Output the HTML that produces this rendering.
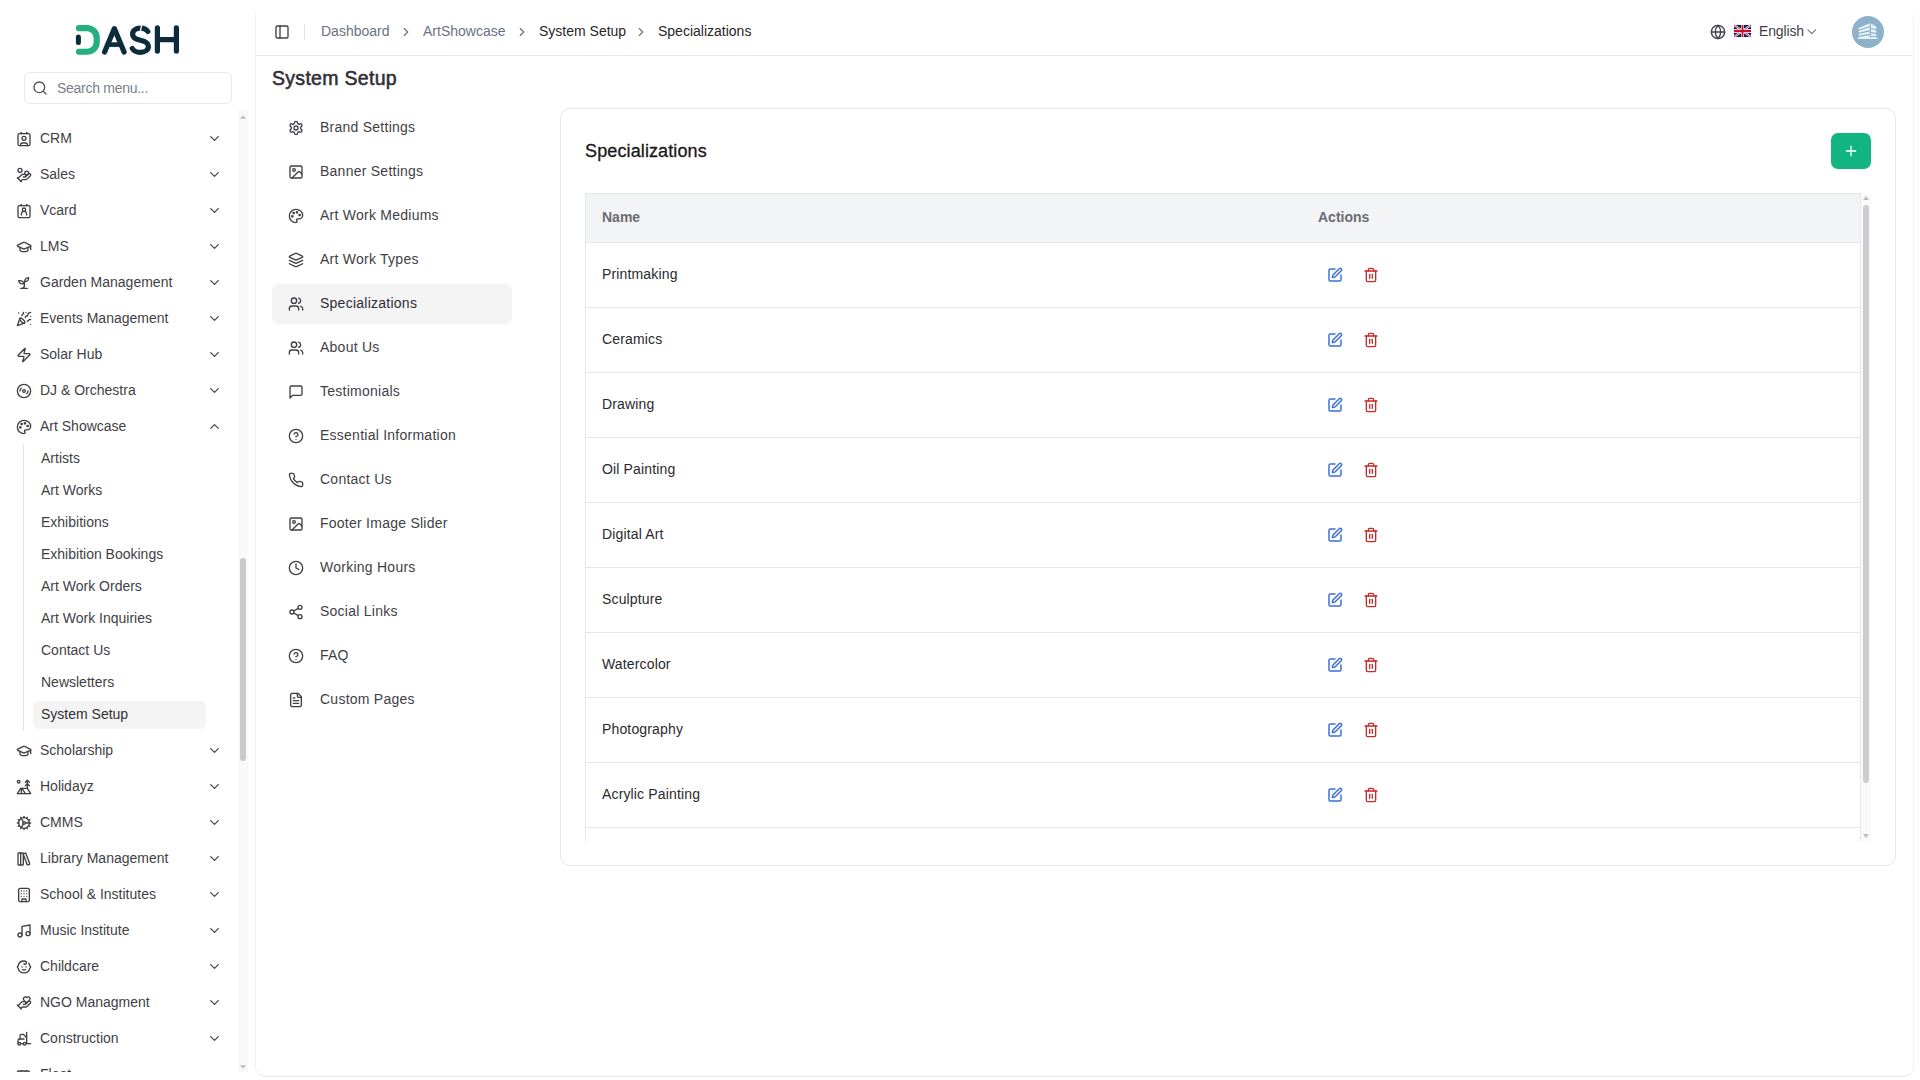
<!DOCTYPE html>
<html><head><meta charset="utf-8"><title>Specializations</title>
<style>
*{box-sizing:border-box;margin:0;padding:0}
html,body{width:1920px;height:1080px;overflow:hidden;background:#ffffff;font-family:"Liberation Sans",sans-serif}
.t{position:absolute;white-space:nowrap}
.ic{position:absolute;overflow:visible}
.box{position:absolute}
#sb{position:absolute;left:0;top:0;width:255px;height:1080px;background:#fff}
#menu{position:absolute;left:0;top:0;width:236px;height:1072px;overflow:hidden;clip-path:inset(110px 0 0 0)}
#main{position:absolute;left:255px;top:-30px;width:1659px;height:1107px;border:1px solid #f2f2f2;border-bottom-color:#e6e6e6;border-radius:10px;background:#fff}
#tbl{position:absolute;left:585px;top:193px;width:1276px;height:648px;overflow:hidden}
</style></head><body>
<div id="sb">
<svg class="ic" style="left:0;top:0;width:255px;height:70px" viewBox="0 0 255 70">
<path d="M79 28.2 H87 A9.75 9.75 0 0 1 96.75 37.95 V42 A9.75 9.75 0 0 1 87 51.75 H79" fill="none" stroke="#22b07f" stroke-width="6.2" stroke-linecap="round" stroke-linejoin="round"/>
<path d="M78.4 37 V42.6" fill="none" stroke="#0c2b3b" stroke-width="5" stroke-linecap="round"/>
<path d="M104.6 52.1 L114.35 28.6 L124.1 52.1" fill="none" stroke="#0c2b3b" stroke-width="5.2" stroke-linecap="round" stroke-linejoin="round"/>
<path d="M108.2 44.6 H120.5" fill="none" stroke="#0c2b3b" stroke-width="4.6"/>
<path d="M147.8 31.5 C146.5 29.2 143.5 28.1 140.3 28.1 C136 28.1 132.6 30.6 132.6 34.2 C132.6 38 136 39.3 140.3 40.2 C144.6 41.1 148.4 42.5 148.4 46.3 C148.4 50 144.8 52.4 140.3 52.4 C136.8 52.4 133.8 51 132.3 48.5" fill="none" stroke="#0c2b3b" stroke-width="5.2" stroke-linecap="round"/>
<path d="M141.6 24.5 L140.2 33" fill="none" stroke="#ffffff" stroke-width="1.3"/>
<path d="M157.4 27.8 V51.1 M176.4 27.8 V51.1 M157.4 39.6 H176.4" fill="none" stroke="#0c2b3b" stroke-width="5.2" stroke-linecap="round"/>
</svg>
<div class="box" style="left:24px;top:72px;width:208px;height:32px;border:1px solid #e8e8ea;border-radius:6px"></div>
<svg class="ic" style="left:32px;top:80.3px;width:16px;height:16px;color:#52525b;" viewBox="0 0 24 24" fill="none" stroke="currentColor" stroke-width="2" stroke-linecap="round" stroke-linejoin="round"><circle cx="11" cy="11" r="8"/><path d="m21 21-4.3-4.3"/></svg>
<div class="t" style="left:57px;top:78.0px;font-size:14px;line-height:20px;color:#7a7f89;font-weight:normal;letter-spacing:-0.28px">Search menu...</div>
<div id="menu">
<svg class="ic" style="left:16px;top:130.5px;width:16px;height:16px;color:#3f3f46;" viewBox="0 0 24 24" fill="none" stroke="currentColor" stroke-width="2" stroke-linecap="round" stroke-linejoin="round"><path d="M16 2v2"/><path d="M7 22v-2a2 2 0 0 1 2-2h6a2 2 0 0 1 2 2v2"/><path d="M8 2v2"/><circle cx="12" cy="11" r="3"/><rect x="3" y="4" width="18" height="18" rx="2"/></svg>
<div class="t" style="left:40px;top:128.0px;font-size:14px;line-height:20px;color:#3f3f46;font-weight:normal;">CRM</div>
<svg class="ic" style="left:207px;top:131.3px;width:15px;height:15px;color:#3f3f46;" viewBox="0 0 24 24" fill="none" stroke="currentColor" stroke-width="1.9" stroke-linecap="round" stroke-linejoin="round"><path d="m6 9 6 6 6-6"/></svg>
<svg class="ic" style="left:16px;top:166.5px;width:16px;height:16px;color:#3f3f46;" viewBox="0 0 24 24" fill="none" stroke="currentColor" stroke-width="2" stroke-linecap="round" stroke-linejoin="round"><path d="M11 15h2a2 2 0 1 0 0-4h-3c-.6 0-1.1.2-1.4.6L3 17"/><path d="m7 21 1.6-1.4c.3-.4.8-.6 1.4-.6h4c1.1 0 2.1-.4 2.8-1.2l4.6-4.4a2 2 0 0 0-2.75-2.91l-4.2 3.9"/><path d="m2 16 6 6"/><circle cx="16" cy="9" r="2.9"/><circle cx="6" cy="5" r="3"/></svg>
<div class="t" style="left:40px;top:164.0px;font-size:14px;line-height:20px;color:#3f3f46;font-weight:normal;">Sales</div>
<svg class="ic" style="left:207px;top:167.3px;width:15px;height:15px;color:#3f3f46;" viewBox="0 0 24 24" fill="none" stroke="currentColor" stroke-width="1.9" stroke-linecap="round" stroke-linejoin="round"><path d="m6 9 6 6 6-6"/></svg>
<svg class="ic" style="left:16px;top:202.5px;width:16px;height:16px;color:#3f3f46;" viewBox="0 0 24 24" fill="none" stroke="currentColor" stroke-width="2" stroke-linecap="round" stroke-linejoin="round"><path d="M16 2v2"/><path d="M8 2v2"/><rect x="3" y="4" width="18" height="18" rx="2"/><circle cx="12" cy="10" r="2.5"/><path d="M8 18c0-3 1.8-5.5 4-5.5s4 2.5 4 5.5"/></svg>
<div class="t" style="left:40px;top:200.0px;font-size:14px;line-height:20px;color:#3f3f46;font-weight:normal;">Vcard</div>
<svg class="ic" style="left:207px;top:203.3px;width:15px;height:15px;color:#3f3f46;" viewBox="0 0 24 24" fill="none" stroke="currentColor" stroke-width="1.9" stroke-linecap="round" stroke-linejoin="round"><path d="m6 9 6 6 6-6"/></svg>
<svg class="ic" style="left:16px;top:238.5px;width:16px;height:16px;color:#3f3f46;" viewBox="0 0 24 24" fill="none" stroke="currentColor" stroke-width="2" stroke-linecap="round" stroke-linejoin="round"><path d="M21.42 10.922a1 1 0 0 0-.019-1.838L12.83 5.18a2 2 0 0 0-1.66 0L2.6 9.08a1 1 0 0 0 0 1.832l8.57 3.908a2 2 0 0 0 1.66 0z"/><path d="M22 10v6"/><path d="M6 12.5V16a6 3 0 0 0 12 0v-3.5"/></svg>
<div class="t" style="left:40px;top:236.0px;font-size:14px;line-height:20px;color:#3f3f46;font-weight:normal;">LMS</div>
<svg class="ic" style="left:207px;top:239.3px;width:15px;height:15px;color:#3f3f46;" viewBox="0 0 24 24" fill="none" stroke="currentColor" stroke-width="1.9" stroke-linecap="round" stroke-linejoin="round"><path d="m6 9 6 6 6-6"/></svg>
<svg class="ic" style="left:16px;top:274.5px;width:16px;height:16px;color:#3f3f46;" viewBox="0 0 24 24" fill="none" stroke="currentColor" stroke-width="2" stroke-linecap="round" stroke-linejoin="round"><path d="M7 20h10"/><path d="M10 20c5.5-2.5.8-6.4 3-10"/><path d="M9.5 9.4c1.1.8 1.8 2.2 2.3 3.7-2 .4-3.5.4-4.8-.3-1.2-.6-2.3-1.9-3-4.2 2.8-.5 4.4 0 5.5.8z"/><path d="M14.1 6a7 7 0 0 0-1.1 4c1.9-.1 3.3-.6 4.3-1.4 1-1 1.6-2.3 1.7-4.6-2.7.1-4 1-4.9 2z"/></svg>
<div class="t" style="left:40px;top:272.0px;font-size:14px;line-height:20px;color:#3f3f46;font-weight:normal;">Garden Management</div>
<svg class="ic" style="left:207px;top:275.3px;width:15px;height:15px;color:#3f3f46;" viewBox="0 0 24 24" fill="none" stroke="currentColor" stroke-width="1.9" stroke-linecap="round" stroke-linejoin="round"><path d="m6 9 6 6 6-6"/></svg>
<svg class="ic" style="left:16px;top:310.5px;width:16px;height:16px;color:#3f3f46;" viewBox="0 0 24 24" fill="none" stroke="currentColor" stroke-width="2" stroke-linecap="round" stroke-linejoin="round"><path d="M5.8 11.3 2 22l10.7-3.79"/><path d="M4 3h.01"/><path d="M22 8h.01"/><path d="M15 2h.01"/><path d="M22 20h.01"/><path d="m22 2-2.24.75a2.9 2.9 0 0 0-1.960 3.12c.1.86-.57 1.63-1.45 1.63h-.38c-.86 0-1.6.6-1.76 1.44L14 10"/><path d="m22 13-.82-.33c-.86-.34-1.820.2-1.98 1.11c-.11.7-.72 1.22-1.43 1.220H17"/><path d="m11 2 .33.82c.34.86-.2 1.82-1.11 1.98C9.52 4.9 9 5.52 9 6.23V7"/><path d="M11 13c1.93 1.93 2.830 4.17 2 5-.83.83-3.07-.07-5-2-1.93-1.93-2.83-4.17-2-5 .83-.83 3.07.07 5 2Z"/></svg>
<div class="t" style="left:40px;top:308.0px;font-size:14px;line-height:20px;color:#3f3f46;font-weight:normal;">Events Management</div>
<svg class="ic" style="left:207px;top:311.3px;width:15px;height:15px;color:#3f3f46;" viewBox="0 0 24 24" fill="none" stroke="currentColor" stroke-width="1.9" stroke-linecap="round" stroke-linejoin="round"><path d="m6 9 6 6 6-6"/></svg>
<svg class="ic" style="left:16px;top:346.5px;width:16px;height:16px;color:#3f3f46;" viewBox="0 0 24 24" fill="none" stroke="currentColor" stroke-width="2" stroke-linecap="round" stroke-linejoin="round"><path d="M4 14a1 1 0 0 1-.78-1.63l9.9-10.2a.5.5 0 0 1 .86.46l-1.92 6.02A1 1 0 0 0 13 10h7a1 1 0 0 1 .78 1.63l-9.9 10.2a.5.5 0 0 1-.86-.46l1.92-6.02A1 1 0 0 0 11 14z"/></svg>
<div class="t" style="left:40px;top:344.0px;font-size:14px;line-height:20px;color:#3f3f46;font-weight:normal;">Solar Hub</div>
<svg class="ic" style="left:207px;top:347.3px;width:15px;height:15px;color:#3f3f46;" viewBox="0 0 24 24" fill="none" stroke="currentColor" stroke-width="1.9" stroke-linecap="round" stroke-linejoin="round"><path d="m6 9 6 6 6-6"/></svg>
<svg class="ic" style="left:16px;top:382.5px;width:16px;height:16px;color:#3f3f46;" viewBox="0 0 24 24" fill="none" stroke="currentColor" stroke-width="2" stroke-linecap="round" stroke-linejoin="round"><circle cx="12" cy="12" r="10"/><path d="M6 12c0-1.7.7-3.2 1.8-4.2"/><circle cx="12" cy="12" r="2"/><path d="M18 12c0 1.7-.7 3.2-1.8 4.2"/></svg>
<div class="t" style="left:40px;top:380.0px;font-size:14px;line-height:20px;color:#3f3f46;font-weight:normal;">DJ &amp; Orchestra</div>
<svg class="ic" style="left:207px;top:383.3px;width:15px;height:15px;color:#3f3f46;" viewBox="0 0 24 24" fill="none" stroke="currentColor" stroke-width="1.9" stroke-linecap="round" stroke-linejoin="round"><path d="m6 9 6 6 6-6"/></svg>
<svg class="ic" style="left:16px;top:418.5px;width:16px;height:16px;color:#3f3f46;" viewBox="0 0 24 24" fill="none" stroke="currentColor" stroke-width="2" stroke-linecap="round" stroke-linejoin="round"><circle cx="13.5" cy="6.5" r="1" fill="currentColor"/><circle cx="17.5" cy="10.5" r="1" fill="currentColor"/><circle cx="8.5" cy="7.5" r="1" fill="currentColor"/><circle cx="6.5" cy="12.5" r="1" fill="currentColor"/><path d="M12 2C6.5 2 2 6.5 2 12s4.5 10 10 10c.926 0 1.648-.746 1.648-1.688 0-.437-.18-.835-.437-1.125-.29-.289-.438-.652-.438-1.125a1.64 1.64 0 0 1 1.668-1.668h1.996c3.051 0 5.555-2.503 5.555-5.554C21.965 6.012 17.461 2 12 2z"/></svg>
<div class="t" style="left:40px;top:416.0px;font-size:14px;line-height:20px;color:#3f3f46;font-weight:normal;">Art Showcase</div>
<svg class="ic" style="left:207px;top:419.2px;width:15px;height:15px;color:#3f3f46;" viewBox="0 0 24 24" fill="none" stroke="currentColor" stroke-width="1.9" stroke-linecap="round" stroke-linejoin="round"><path d="m18 15-6-6-6 6"/></svg>
<div class="box" style="left:23px;top:444px;width:1px;height:287px;background:#e4e4e7"></div>
<div class="box" style="left:33px;top:701px;width:173px;height:28px;background:#f4f4f5;border-radius:6px"></div>
<div class="t" style="left:41px;top:448.0px;font-size:14px;line-height:20px;color:#3f3f46;font-weight:normal;">Artists</div>
<div class="t" style="left:41px;top:480.0px;font-size:14px;line-height:20px;color:#3f3f46;font-weight:normal;">Art Works</div>
<div class="t" style="left:41px;top:512.0px;font-size:14px;line-height:20px;color:#3f3f46;font-weight:normal;">Exhibitions</div>
<div class="t" style="left:41px;top:544.0px;font-size:14px;line-height:20px;color:#3f3f46;font-weight:normal;">Exhibition Bookings</div>
<div class="t" style="left:41px;top:576.0px;font-size:14px;line-height:20px;color:#3f3f46;font-weight:normal;">Art Work Orders</div>
<div class="t" style="left:41px;top:608.0px;font-size:14px;line-height:20px;color:#3f3f46;font-weight:normal;">Art Work Inquiries</div>
<div class="t" style="left:41px;top:640.0px;font-size:14px;line-height:20px;color:#3f3f46;font-weight:normal;">Contact Us</div>
<div class="t" style="left:41px;top:672.0px;font-size:14px;line-height:20px;color:#3f3f46;font-weight:normal;">Newsletters</div>
<div class="t" style="left:41px;top:704.0px;font-size:14px;line-height:20px;color:#303036;font-weight:normal;">System Setup</div>
<svg class="ic" style="left:16px;top:742.5px;width:16px;height:16px;color:#3f3f46;" viewBox="0 0 24 24" fill="none" stroke="currentColor" stroke-width="2" stroke-linecap="round" stroke-linejoin="round"><path d="M21.42 10.922a1 1 0 0 0-.019-1.838L12.83 5.18a2 2 0 0 0-1.66 0L2.6 9.08a1 1 0 0 0 0 1.832l8.57 3.908a2 2 0 0 0 1.66 0z"/><path d="M22 10v6"/><path d="M6 12.5V16a6 3 0 0 0 12 0v-3.5"/></svg>
<div class="t" style="left:40px;top:740.0px;font-size:14px;line-height:20px;color:#3f3f46;font-weight:normal;">Scholarship</div>
<svg class="ic" style="left:207px;top:743.3px;width:15px;height:15px;color:#3f3f46;" viewBox="0 0 24 24" fill="none" stroke="currentColor" stroke-width="1.9" stroke-linecap="round" stroke-linejoin="round"><path d="m6 9 6 6 6-6"/></svg>
<svg class="ic" style="left:16px;top:778.5px;width:16px;height:16px;color:#3f3f46;" viewBox="0 0 24 24" fill="none" stroke="currentColor" stroke-width="2" stroke-linecap="round" stroke-linejoin="round"><circle cx="4" cy="4" r="2"/><path d="m14 5 3-3 3 3"/><path d="m14 10 3-3 3 3"/><path d="M17 14V2"/><path d="M17 14H7l-5 8h20Z"/><path d="M8 14v8"/><path d="m9 14 5 8"/></svg>
<div class="t" style="left:40px;top:776.0px;font-size:14px;line-height:20px;color:#3f3f46;font-weight:normal;">Holidayz</div>
<svg class="ic" style="left:207px;top:779.3px;width:15px;height:15px;color:#3f3f46;" viewBox="0 0 24 24" fill="none" stroke="currentColor" stroke-width="1.9" stroke-linecap="round" stroke-linejoin="round"><path d="m6 9 6 6 6-6"/></svg>
<svg class="ic" style="left:16px;top:814.5px;width:16px;height:16px;color:#3f3f46;" viewBox="0 0 24 24" fill="none" stroke="currentColor" stroke-width="2" stroke-linecap="round" stroke-linejoin="round"><path d="M12 20a8 8 0 1 0 0-16 8 8 0 0 0 0 16Z"/><path d="M12 14a2 2 0 1 0 0-4 2 2 0 0 0 0 4Z"/><path d="M12 2v2"/><path d="M12 22v-2"/><path d="m17 20.66-1-1.73"/><path d="M11 10.27 7 3.34"/><path d="m20.66 17-1.73-1"/><path d="m3.34 7 1.73 1"/><path d="M14 12h8"/><path d="M2 12h2"/><path d="m20.66 7-1.73 1"/><path d="m3.34 17 1.73-1"/><path d="m17 3.34-1 1.73"/><path d="m11 13.73-4 6.93"/></svg>
<div class="t" style="left:40px;top:812.0px;font-size:14px;line-height:20px;color:#3f3f46;font-weight:normal;">CMMS</div>
<svg class="ic" style="left:207px;top:815.3px;width:15px;height:15px;color:#3f3f46;" viewBox="0 0 24 24" fill="none" stroke="currentColor" stroke-width="1.9" stroke-linecap="round" stroke-linejoin="round"><path d="m6 9 6 6 6-6"/></svg>
<svg class="ic" style="left:16px;top:850.5px;width:16px;height:16px;color:#3f3f46;" viewBox="0 0 24 24" fill="none" stroke="currentColor" stroke-width="2" stroke-linecap="round" stroke-linejoin="round"><rect width="8" height="18" x="3" y="3" rx="1"/><path d="M7 3v18"/><path d="M20.4 18.9c.2.5-.1 1.1-.6 1.3l-1.9.7c-.5.2-1.1-.1-1.3-.6L11.1 5.1c-.2-.5.1-1.1.6-1.3l1.9-.7c.5-.2 1.1.1 1.3.6Z"/></svg>
<div class="t" style="left:40px;top:848.0px;font-size:14px;line-height:20px;color:#3f3f46;font-weight:normal;">Library Management</div>
<svg class="ic" style="left:207px;top:851.3px;width:15px;height:15px;color:#3f3f46;" viewBox="0 0 24 24" fill="none" stroke="currentColor" stroke-width="1.9" stroke-linecap="round" stroke-linejoin="round"><path d="m6 9 6 6 6-6"/></svg>
<svg class="ic" style="left:16px;top:886.5px;width:16px;height:16px;color:#3f3f46;" viewBox="0 0 24 24" fill="none" stroke="currentColor" stroke-width="2" stroke-linecap="round" stroke-linejoin="round"><rect width="16" height="20" x="4" y="2" rx="2" ry="2"/><path d="M9 22v-4h6v4"/><path d="M8 6h.01"/><path d="M16 6h.01"/><path d="M12 6h.01"/><path d="M12 10h.01"/><path d="M12 14h.01"/><path d="M16 10h.01"/><path d="M16 14h.01"/><path d="M8 10h.01"/><path d="M8 14h.01"/></svg>
<div class="t" style="left:40px;top:884.0px;font-size:14px;line-height:20px;color:#3f3f46;font-weight:normal;">School &amp; Institutes</div>
<svg class="ic" style="left:207px;top:887.3px;width:15px;height:15px;color:#3f3f46;" viewBox="0 0 24 24" fill="none" stroke="currentColor" stroke-width="1.9" stroke-linecap="round" stroke-linejoin="round"><path d="m6 9 6 6 6-6"/></svg>
<svg class="ic" style="left:16px;top:922.5px;width:16px;height:16px;color:#3f3f46;" viewBox="0 0 24 24" fill="none" stroke="currentColor" stroke-width="2" stroke-linecap="round" stroke-linejoin="round"><path d="M9 18V5l12-2v13"/><circle cx="6" cy="18" r="3"/><circle cx="18" cy="16" r="3"/></svg>
<div class="t" style="left:40px;top:920.0px;font-size:14px;line-height:20px;color:#3f3f46;font-weight:normal;">Music Institute</div>
<svg class="ic" style="left:207px;top:923.3px;width:15px;height:15px;color:#3f3f46;" viewBox="0 0 24 24" fill="none" stroke="currentColor" stroke-width="1.9" stroke-linecap="round" stroke-linejoin="round"><path d="m6 9 6 6 6-6"/></svg>
<svg class="ic" style="left:16px;top:958.5px;width:16px;height:16px;color:#3f3f46;" viewBox="0 0 24 24" fill="none" stroke="currentColor" stroke-width="2" stroke-linecap="round" stroke-linejoin="round"><path d="M9 12h.01"/><path d="M15 12h.01"/><path d="M10 16c.5.3 1.2.5 2 .5s1.5-.2 2-.5"/><path d="M19 6.3a9 9 0 0 1 1.8 3.9 2 2 0 0 1 0 3.6 9 9 0 0 1-17.6 0 2 2 0 0 1 0-3.6A9 9 0 0 1 12 3c2 0 3.5 1.1 3.5 2.5s-.9 2.5-2 2.5c-.8 0-1.5-.4-1.5-1"/></svg>
<div class="t" style="left:40px;top:956.0px;font-size:14px;line-height:20px;color:#3f3f46;font-weight:normal;">Childcare</div>
<svg class="ic" style="left:207px;top:959.3px;width:15px;height:15px;color:#3f3f46;" viewBox="0 0 24 24" fill="none" stroke="currentColor" stroke-width="1.9" stroke-linecap="round" stroke-linejoin="round"><path d="m6 9 6 6 6-6"/></svg>
<svg class="ic" style="left:16px;top:994.5px;width:16px;height:16px;color:#3f3f46;" viewBox="0 0 24 24" fill="none" stroke="currentColor" stroke-width="2" stroke-linecap="round" stroke-linejoin="round"><path d="M11 14h2a2 2 0 1 0 0-4h-3c-.6 0-1.1.2-1.4.6L3 16"/><path d="m7 20 1.6-1.4c.3-.4.8-.6 1.4-.6h4c1.1 0 2.1-.4 2.8-1.2l4.6-4.4a2 2 0 0 0-2.75-2.91l-4.2 3.9"/><path d="m2 15 6 6"/><path d="M19.5 8.5c.7-.7 1.5-1.6 1.5-2.7A2.73 2.73 0 0 0 16 4a2.78 2.78 0 0 0-5 1.8c0 1.2.8 2 1.5 2.8L16 12Z"/></svg>
<div class="t" style="left:40px;top:992.0px;font-size:14px;line-height:20px;color:#3f3f46;font-weight:normal;">NGO Managment</div>
<svg class="ic" style="left:207px;top:995.3px;width:15px;height:15px;color:#3f3f46;" viewBox="0 0 24 24" fill="none" stroke="currentColor" stroke-width="1.9" stroke-linecap="round" stroke-linejoin="round"><path d="m6 9 6 6 6-6"/></svg>
<svg class="ic" style="left:16px;top:1030.5px;width:16px;height:16px;color:#3f3f46;" viewBox="0 0 24 24" fill="none" stroke="currentColor" stroke-width="2" stroke-linecap="round" stroke-linejoin="round"><path d="M12 12H5a2 2 0 0 0-2 2v5"/><circle cx="13" cy="19" r="2"/><circle cx="5" cy="19" r="2"/><path d="M8 19h3m5-17v17h6M6 12V7c0-1.1.9-2 2-2h3l5 5"/></svg>
<div class="t" style="left:40px;top:1028.0px;font-size:14px;line-height:20px;color:#3f3f46;font-weight:normal;">Construction</div>
<svg class="ic" style="left:207px;top:1031.3px;width:15px;height:15px;color:#3f3f46;" viewBox="0 0 24 24" fill="none" stroke="currentColor" stroke-width="1.9" stroke-linecap="round" stroke-linejoin="round"><path d="m6 9 6 6 6-6"/></svg>
<svg class="ic" style="left:16px;top:1066.5px;width:16px;height:16px;color:#3f3f46;" viewBox="0 0 24 24" fill="none" stroke="currentColor" stroke-width="2" stroke-linecap="round" stroke-linejoin="round"><path d="M8 6v6"/><path d="M15 6v6"/><path d="M2 12h19.6"/><path d="M18 18h3s.5-1.7.8-2.8c.1-.4.2-.8.2-1.2 0-.4-.1-.8-.2-1.2l-1.4-5C20.100 6.8 19.1 6 18 6H4a2 2 0 0 0-2 2v10h3"/><circle cx="7" cy="18" r="2"/><path d="M9 18h5"/><circle cx="16" cy="18" r="2"/></svg>
<div class="t" style="left:40px;top:1064.0px;font-size:14px;line-height:20px;color:#3f3f46;font-weight:normal;">Fleet</div>
</div>
<div class="box" style="left:238px;top:109px;width:10px;height:963px;background:#f9f9f9"></div>
<div class="box" style="left:240px;top:558px;width:6px;height:203px;background:#c9c9cc;border-radius:3px"></div>
<div class="box" style="left:240px;top:115px;width:0;height:0;border-left:3px solid transparent;border-right:3px solid transparent;border-bottom:4px solid #c2c2c2"></div>
<div class="box" style="left:240px;top:1065px;width:0;height:0;border-left:3px solid transparent;border-right:3px solid transparent;border-top:4px solid #c2c2c2"></div>
</div>
<div id="main"></div>
<div class="box" style="left:256px;top:55px;width:1656px;height:1px;background:#e5e7eb"></div>
<div class="box" style="left:250px;top:0;width:12px;height:18px;background:linear-gradient(#fff 40%,rgba(255,255,255,0))"></div>
<div class="box" style="left:1906px;top:0;width:14px;height:18px;background:linear-gradient(#fff 40%,rgba(255,255,255,0))"></div>
<svg class="ic" style="left:274px;top:24px;width:16px;height:16px;color:#3f3f46;" viewBox="0 0 24 24" fill="none" stroke="currentColor" stroke-width="2" stroke-linecap="round" stroke-linejoin="round"><rect width="18" height="18" x="3" y="3" rx="2"/><path d="M9 3v18"/></svg>
<div class="box" style="left:304px;top:24px;width:1px;height:16px;background:#e4e4e7"></div>
<div class="t" style="left:321px;top:21.0px;font-size:14px;line-height:20px;color:#6b7280;font-weight:normal;">Dashboard</div>
<div class="t" style="left:423px;top:21.0px;font-size:14px;line-height:20px;color:#6b7280;font-weight:normal;">ArtShowcase</div>
<div class="t" style="left:539px;top:21.0px;font-size:14px;line-height:20px;color:#27272a;font-weight:normal;">System Setup</div>
<div class="t" style="left:658px;top:21.0px;font-size:14px;line-height:20px;color:#27272a;font-weight:normal;">Specializations</div>
<svg class="ic" style="left:399px;top:25px;width:14px;height:14px;color:#6b7280;" viewBox="0 0 24 24" fill="none" stroke="currentColor" stroke-width="2" stroke-linecap="round" stroke-linejoin="round"><path d="m9 18 6-6-6-6"/></svg>
<svg class="ic" style="left:515px;top:25px;width:14px;height:14px;color:#6b7280;" viewBox="0 0 24 24" fill="none" stroke="currentColor" stroke-width="2" stroke-linecap="round" stroke-linejoin="round"><path d="m9 18 6-6-6-6"/></svg>
<svg class="ic" style="left:634px;top:25px;width:14px;height:14px;color:#6b7280;" viewBox="0 0 24 24" fill="none" stroke="currentColor" stroke-width="2" stroke-linecap="round" stroke-linejoin="round"><path d="m9 18 6-6-6-6"/></svg>
<svg class="ic" style="left:1710px;top:24px;width:16px;height:16px;color:#3f3f46;" viewBox="0 0 24 24" fill="none" stroke="currentColor" stroke-width="2" stroke-linecap="round" stroke-linejoin="round"><circle cx="12" cy="12" r="10"/><path d="M12 2a14.5 14.5 0 0 0 0 20 14.5 14.5 0 0 0 0-20"/><path d="M2 12h20"/></svg>
<svg class="ic" style="left:1734px;top:25px;width:17px;height:12px" viewBox="0 0 60 30" preserveAspectRatio="none">
<rect width="60" height="30" fill="#012169"/>
<path d="M0,0 L60,30 M60,0 L0,30" stroke="#fff" stroke-width="6"/>
<path d="M0,0 L60,30 M60,0 L0,30" stroke="#C8102E" stroke-width="2.5"/>
<path d="M30,0 V30 M0,15 H60" stroke="#fff" stroke-width="10"/>
<path d="M30,0 V30 M0,15 H60" stroke="#C8102E" stroke-width="6"/>
</svg>
<div class="t" style="left:1759px;top:21.0px;font-size:14px;line-height:20px;color:#3f3f46;font-weight:normal;letter-spacing:-0.15px">English</div>
<svg class="ic" style="left:1804.4px;top:23.7px;width:15.5px;height:15.5px;color:#71717a;" viewBox="0 0 24 24" fill="none" stroke="currentColor" stroke-width="1.7" stroke-linecap="round" stroke-linejoin="round"><path d="m6 9 6 6 6-6"/></svg>
<div class="box" style="left:1852px;top:16px;width:32px;height:32px;border-radius:50%;background:#8db1c8;overflow:hidden"><svg style="position:absolute;left:0;top:0;width:32px;height:32px" viewBox="0 0 32 32"><path d="M6.6 12 L18.2 6.9 L24.2 10.6 V22 H6.6 Z" fill="#e6f2f8"/><path d="M6 14.6 L18.2 10.6 M6 17.6 L18.2 14.6 M6 20.4 L18.2 18.4 M18.2 12.2 L24.5 14 M18.2 16.4 L24.5 17.6 M18.2 20.2 L24.5 20.8" stroke="#8db1c8" stroke-width="1.1" fill="none"/><path d="M18.3 7 V22.5" stroke="#8db1c8" stroke-width="1.1"/><path d="M5.8 22.4 H25.5" stroke="#e6f2f8" stroke-width="1.2"/></svg></div>
<div class="t" style="left:272px;top:66.4px;font-size:19.5px;line-height:24px;color:#2f2f36;font-weight:normal;-webkit-text-stroke:0.55px #2f2f36;letter-spacing:0.3px">System Setup</div>
<div class="box" style="left:272px;top:284px;width:240px;height:40px;background:#f4f4f5;border-radius:7px"></div>
<svg class="ic" style="left:287.7px;top:119.6px;width:16px;height:16px;color:#3f3f46;" viewBox="0 0 24 24" fill="none" stroke="currentColor" stroke-width="2" stroke-linecap="round" stroke-linejoin="round"><path d="M12.22 2h-.44a2 2 0 0 0-2 2v.18a2 2 0 0 1-1 1.73l-.43.25a2 2 0 0 1-2 0l-.15-.08a2 2 0 0 0-2.73.73l-.22.38a2 2 0 0 0 .73 2.73l.15.1a2 2 0 0 1 1 1.72v.51a2 2 0 0 1-1 1.74l-.15.09a2 2 0 0 0-.73 2.73l.22.38a2 2 0 0 0 2.73.73l.15-.08a2 2 0 0 1 2 0l.43.25a2 2 0 0 1 1 1.73V20a2 2 0 0 0 2 2h.44a2 2 0 0 0 2-2v-.18a2 2 0 0 1 1-1.73l.43-.25a2 2 0 0 1 2 0l.15.08a2 2 0 0 0 2.73-.73l.22-.39a2 2 0 0 0-.73-2.73l-.15-.08a2 2 0 0 1-1-1.74v-.5a2 2 0 0 1 1-1.74l.15-.09a2 2 0 0 0 .73-2.73l-.22-.38a2 2 0 0 0-2.73-.73l-.15.08a2 2 0 0 1-2 0l-.43-.25a2 2 0 0 1-1-1.73V4a2 2 0 0 0-2-2z"/><circle cx="12" cy="12" r="3"/></svg>
<div class="t" style="left:320px;top:117.0px;font-size:14px;line-height:20px;color:#3f3f46;font-weight:normal;letter-spacing:0.25px">Brand Settings</div>
<svg class="ic" style="left:287.7px;top:163.6px;width:16px;height:16px;color:#3f3f46;" viewBox="0 0 24 24" fill="none" stroke="currentColor" stroke-width="2" stroke-linecap="round" stroke-linejoin="round"><rect width="18" height="18" x="3" y="3" rx="2" ry="2"/><circle cx="9" cy="9" r="2"/><path d="m21 15-3.086-3.086a2 2 0 0 0-2.828 0L6 21"/></svg>
<div class="t" style="left:320px;top:161.0px;font-size:14px;line-height:20px;color:#3f3f46;font-weight:normal;letter-spacing:0.25px">Banner Settings</div>
<svg class="ic" style="left:287.7px;top:207.6px;width:16px;height:16px;color:#3f3f46;" viewBox="0 0 24 24" fill="none" stroke="currentColor" stroke-width="2" stroke-linecap="round" stroke-linejoin="round"><circle cx="13.5" cy="6.5" r="1" fill="currentColor"/><circle cx="17.5" cy="10.5" r="1" fill="currentColor"/><circle cx="8.5" cy="7.5" r="1" fill="currentColor"/><circle cx="6.5" cy="12.5" r="1" fill="currentColor"/><path d="M12 2C6.5 2 2 6.5 2 12s4.5 10 10 10c.926 0 1.648-.746 1.648-1.688 0-.437-.18-.835-.437-1.125-.29-.289-.438-.652-.438-1.125a1.64 1.64 0 0 1 1.668-1.668h1.996c3.051 0 5.555-2.503 5.555-5.554C21.965 6.012 17.461 2 12 2z"/></svg>
<div class="t" style="left:320px;top:205.0px;font-size:14px;line-height:20px;color:#3f3f46;font-weight:normal;letter-spacing:0.25px">Art Work Mediums</div>
<svg class="ic" style="left:287.7px;top:251.6px;width:16px;height:16px;color:#3f3f46;" viewBox="0 0 24 24" fill="none" stroke="currentColor" stroke-width="2" stroke-linecap="round" stroke-linejoin="round"><path d="M12.83 2.18a2 2 0 0 0-1.66 0L2.6 6.08a1 1 0 0 0 0 1.83l8.58 3.91a2 2 0 0 0 1.66 0l8.58-3.9a1 1 0 0 0 0-1.83Z"/><path d="m22 17.65-9.17 4.16a2 2 0 0 1-1.66 0L2 17.65"/><path d="m22 12.65-9.17 4.16a2 2 0 0 1-1.66 0L2 12.65"/></svg>
<div class="t" style="left:320px;top:249.0px;font-size:14px;line-height:20px;color:#3f3f46;font-weight:normal;letter-spacing:0.25px">Art Work Types</div>
<svg class="ic" style="left:287.7px;top:295.6px;width:16px;height:16px;color:#3f3f46;" viewBox="0 0 24 24" fill="none" stroke="currentColor" stroke-width="2" stroke-linecap="round" stroke-linejoin="round"><path d="M16 21v-2a4 4 0 0 0-4-4H6a4 4 0 0 0-4 4v2"/><circle cx="9" cy="7" r="4"/><path d="M22 21v-2a4 4 0 0 0-3-3.87"/><path d="M16 3.13a4 4 0 0 1 0 7.75"/></svg>
<div class="t" style="left:320px;top:293.0px;font-size:14px;line-height:20px;color:#2d2d33;font-weight:normal;letter-spacing:0.25px">Specializations</div>
<svg class="ic" style="left:287.7px;top:339.6px;width:16px;height:16px;color:#3f3f46;" viewBox="0 0 24 24" fill="none" stroke="currentColor" stroke-width="2" stroke-linecap="round" stroke-linejoin="round"><path d="M16 21v-2a4 4 0 0 0-4-4H6a4 4 0 0 0-4 4v2"/><circle cx="9" cy="7" r="4"/><path d="M22 21v-2a4 4 0 0 0-3-3.87"/><path d="M16 3.13a4 4 0 0 1 0 7.75"/></svg>
<div class="t" style="left:320px;top:337.0px;font-size:14px;line-height:20px;color:#3f3f46;font-weight:normal;letter-spacing:0.25px">About Us</div>
<svg class="ic" style="left:287.7px;top:383.6px;width:16px;height:16px;color:#3f3f46;" viewBox="0 0 24 24" fill="none" stroke="currentColor" stroke-width="2" stroke-linecap="round" stroke-linejoin="round"><path d="M21 15a2 2 0 0 1-2 2H7l-4 4V5a2 2 0 0 1 2-2h14a2 2 0 0 1 2 2z"/></svg>
<div class="t" style="left:320px;top:381.0px;font-size:14px;line-height:20px;color:#3f3f46;font-weight:normal;letter-spacing:0.25px">Testimonials</div>
<svg class="ic" style="left:287.7px;top:427.6px;width:16px;height:16px;color:#3f3f46;" viewBox="0 0 24 24" fill="none" stroke="currentColor" stroke-width="2" stroke-linecap="round" stroke-linejoin="round"><circle cx="12" cy="12" r="10"/><path d="M9.09 9a3 3 0 0 1 5.83 1c0 2-3 3-3 3"/><path d="M12 17h.01"/></svg>
<div class="t" style="left:320px;top:425.0px;font-size:14px;line-height:20px;color:#3f3f46;font-weight:normal;letter-spacing:0.25px">Essential Information</div>
<svg class="ic" style="left:287.7px;top:471.6px;width:16px;height:16px;color:#3f3f46;" viewBox="0 0 24 24" fill="none" stroke="currentColor" stroke-width="2" stroke-linecap="round" stroke-linejoin="round"><path d="M22 16.92v3a2 2 0 0 1-2.18 2 19.79 19.79 0 0 1-8.63-3.07 19.5 19.5 0 0 1-6-6 19.79 19.79 0 0 1-3.07-8.67A2 2 0 0 1 4.11 2h3a2 2 0 0 1 2 1.72 12.84 12.84 0 0 0 .7 2.81 2 2 0 0 1-.45 2.11L8.090 9.91a16 16 0 0 0 6 6l1.27-1.27a2 2 0 0 1 2.11-.45 12.84 12.84 0 0 0 2.81.7A2 2 0 0 1 22 16.92z"/></svg>
<div class="t" style="left:320px;top:469.0px;font-size:14px;line-height:20px;color:#3f3f46;font-weight:normal;letter-spacing:0.25px">Contact Us</div>
<svg class="ic" style="left:287.7px;top:515.6px;width:16px;height:16px;color:#3f3f46;" viewBox="0 0 24 24" fill="none" stroke="currentColor" stroke-width="2" stroke-linecap="round" stroke-linejoin="round"><rect width="18" height="18" x="3" y="3" rx="2" ry="2"/><circle cx="9" cy="9" r="2"/><path d="m21 15-3.086-3.086a2 2 0 0 0-2.828 0L6 21"/></svg>
<div class="t" style="left:320px;top:513.0px;font-size:14px;line-height:20px;color:#3f3f46;font-weight:normal;letter-spacing:0.25px">Footer Image Slider</div>
<svg class="ic" style="left:287.7px;top:559.6px;width:16px;height:16px;color:#3f3f46;" viewBox="0 0 24 24" fill="none" stroke="currentColor" stroke-width="2" stroke-linecap="round" stroke-linejoin="round"><circle cx="12" cy="12" r="10"/><polyline points="12 6 12 12 16 14"/></svg>
<div class="t" style="left:320px;top:557.0px;font-size:14px;line-height:20px;color:#3f3f46;font-weight:normal;letter-spacing:0.25px">Working Hours</div>
<svg class="ic" style="left:287.7px;top:603.6px;width:16px;height:16px;color:#3f3f46;" viewBox="0 0 24 24" fill="none" stroke="currentColor" stroke-width="2" stroke-linecap="round" stroke-linejoin="round"><circle cx="18" cy="5" r="3"/><circle cx="6" cy="12" r="3"/><circle cx="18" cy="19" r="3"/><line x1="8.59" x2="15.42" y1="13.51" y2="17.49"/><line x1="15.41" x2="8.59" y1="6.51" y2="10.49"/></svg>
<div class="t" style="left:320px;top:601.0px;font-size:14px;line-height:20px;color:#3f3f46;font-weight:normal;letter-spacing:0.25px">Social Links</div>
<svg class="ic" style="left:287.7px;top:647.6px;width:16px;height:16px;color:#3f3f46;" viewBox="0 0 24 24" fill="none" stroke="currentColor" stroke-width="2" stroke-linecap="round" stroke-linejoin="round"><circle cx="12" cy="12" r="10"/><path d="M9.09 9a3 3 0 0 1 5.83 1c0 2-3 3-3 3"/><path d="M12 17h.01"/></svg>
<div class="t" style="left:320px;top:645.0px;font-size:14px;line-height:20px;color:#3f3f46;font-weight:normal;letter-spacing:0.25px">FAQ</div>
<svg class="ic" style="left:287.7px;top:691.6px;width:16px;height:16px;color:#3f3f46;" viewBox="0 0 24 24" fill="none" stroke="currentColor" stroke-width="2" stroke-linecap="round" stroke-linejoin="round"><path d="M15 2H6a2 2 0 0 0-2 2v16a2 2 0 0 0 2 2h12a2 2 0 0 0 2-2V7Z"/><path d="M14 2v4a2 2 0 0 0 2 2h4"/><path d="M10 9H8"/><path d="M16 13H8"/><path d="M16 17H8"/></svg>
<div class="t" style="left:320px;top:689.0px;font-size:14px;line-height:20px;color:#3f3f46;font-weight:normal;letter-spacing:0.25px">Custom Pages</div>
<div class="box" style="left:560px;top:108px;width:1336px;height:758px;border:1px solid #e7e7e9;border-radius:10px;background:#fff"></div>
<div class="t" style="left:585px;top:139.0px;font-size:18px;line-height:24px;color:#18181b;font-weight:normal;-webkit-text-stroke:0.3px #18181b;letter-spacing:0.12px">Specializations</div>
<div class="box" style="left:1831px;top:133px;width:40px;height:36px;background:#12b47f;border-radius:7px"></div>
<svg class="ic" style="left:1843px;top:143px;width:16px;height:16px;color:#ffffff;" viewBox="0 0 24 24" fill="none" stroke="currentColor" stroke-width="1.9" stroke-linecap="round" stroke-linejoin="round"><path d="M5 12h14"/><path d="M12 5v14"/></svg>
<div id="tbl">
<div class="box" style="left:0;top:0;width:1276px;height:50px;background:#f3f4f6;border:1px solid #e5e7eb;border-bottom:1px solid #e5e7eb"></div>
<div class="t" style="left:17px;top:14.0px;font-size:14px;line-height:20px;color:#6b6b70;font-weight:bold;">Name</div>
<div class="t" style="left:733px;top:14.0px;font-size:14px;line-height:20px;color:#6b6b70;font-weight:bold;">Actions</div>
<div class="box" style="left:0;top:0;width:1px;height:648px;background:#e5e7eb"></div>
<div class="box" style="left:1275px;top:0;width:1px;height:648px;background:#e5e7eb"></div>
<div class="t" style="left:17px;top:71.0px;font-size:14px;line-height:20px;color:#2a2a2e;font-weight:normal;letter-spacing:0.15px">Printmaking</div>
<svg class="ic" style="left:741.7px;top:73.5px;width:16px;height:16px;color:#3a6fd8;" viewBox="0 0 24 24" fill="none" stroke="currentColor" stroke-width="2.2" stroke-linecap="round" stroke-linejoin="round"><path d="M12 3H5a2 2 0 0 0-2 2v14a2 2 0 0 0 2 2h14a2 2 0 0 0 2-2v-7"/><path d="M18.375 2.625a1 1 0 0 1 3 3l-9.013 9.014a2 2 0 0 1-.853.505l-2.873.84a.5.5 0 0 1-.62-.62l.84-2.873a2 2 0 0 1 .506-.852z"/></svg>
<svg class="ic" style="left:777.8px;top:73.9px;width:16px;height:16px;color:#c92a2a;" viewBox="0 0 24 24" fill="none" stroke="currentColor" stroke-width="2" stroke-linecap="round" stroke-linejoin="round"><path d="M3 6h18"/><path d="M19 6v14c0 1-1 2-2 2H7c-1 0-2-1-2-2V6"/><path d="M8 6V4c0-1 1-2 2-2h4c1 0 2 1 2 2v2"/><line x1="10" x2="10" y1="11" y2="17"/><line x1="14" x2="14" y1="11" y2="17"/></svg>
<div class="box" style="left:0;top:114px;width:1276px;height:1px;background:#e5e7eb"></div>
<div class="t" style="left:17px;top:136.0px;font-size:14px;line-height:20px;color:#2a2a2e;font-weight:normal;letter-spacing:0.15px">Ceramics</div>
<svg class="ic" style="left:741.7px;top:138.5px;width:16px;height:16px;color:#3a6fd8;" viewBox="0 0 24 24" fill="none" stroke="currentColor" stroke-width="2.2" stroke-linecap="round" stroke-linejoin="round"><path d="M12 3H5a2 2 0 0 0-2 2v14a2 2 0 0 0 2 2h14a2 2 0 0 0 2-2v-7"/><path d="M18.375 2.625a1 1 0 0 1 3 3l-9.013 9.014a2 2 0 0 1-.853.505l-2.873.84a.5.5 0 0 1-.62-.62l.84-2.873a2 2 0 0 1 .506-.852z"/></svg>
<svg class="ic" style="left:777.8px;top:138.9px;width:16px;height:16px;color:#c92a2a;" viewBox="0 0 24 24" fill="none" stroke="currentColor" stroke-width="2" stroke-linecap="round" stroke-linejoin="round"><path d="M3 6h18"/><path d="M19 6v14c0 1-1 2-2 2H7c-1 0-2-1-2-2V6"/><path d="M8 6V4c0-1 1-2 2-2h4c1 0 2 1 2 2v2"/><line x1="10" x2="10" y1="11" y2="17"/><line x1="14" x2="14" y1="11" y2="17"/></svg>
<div class="box" style="left:0;top:179px;width:1276px;height:1px;background:#e5e7eb"></div>
<div class="t" style="left:17px;top:201.0px;font-size:14px;line-height:20px;color:#2a2a2e;font-weight:normal;letter-spacing:0.15px">Drawing</div>
<svg class="ic" style="left:741.7px;top:203.5px;width:16px;height:16px;color:#3a6fd8;" viewBox="0 0 24 24" fill="none" stroke="currentColor" stroke-width="2.2" stroke-linecap="round" stroke-linejoin="round"><path d="M12 3H5a2 2 0 0 0-2 2v14a2 2 0 0 0 2 2h14a2 2 0 0 0 2-2v-7"/><path d="M18.375 2.625a1 1 0 0 1 3 3l-9.013 9.014a2 2 0 0 1-.853.505l-2.873.84a.5.5 0 0 1-.62-.62l.84-2.873a2 2 0 0 1 .506-.852z"/></svg>
<svg class="ic" style="left:777.8px;top:203.9px;width:16px;height:16px;color:#c92a2a;" viewBox="0 0 24 24" fill="none" stroke="currentColor" stroke-width="2" stroke-linecap="round" stroke-linejoin="round"><path d="M3 6h18"/><path d="M19 6v14c0 1-1 2-2 2H7c-1 0-2-1-2-2V6"/><path d="M8 6V4c0-1 1-2 2-2h4c1 0 2 1 2 2v2"/><line x1="10" x2="10" y1="11" y2="17"/><line x1="14" x2="14" y1="11" y2="17"/></svg>
<div class="box" style="left:0;top:244px;width:1276px;height:1px;background:#e5e7eb"></div>
<div class="t" style="left:17px;top:266.0px;font-size:14px;line-height:20px;color:#2a2a2e;font-weight:normal;letter-spacing:0.15px">Oil Painting</div>
<svg class="ic" style="left:741.7px;top:268.5px;width:16px;height:16px;color:#3a6fd8;" viewBox="0 0 24 24" fill="none" stroke="currentColor" stroke-width="2.2" stroke-linecap="round" stroke-linejoin="round"><path d="M12 3H5a2 2 0 0 0-2 2v14a2 2 0 0 0 2 2h14a2 2 0 0 0 2-2v-7"/><path d="M18.375 2.625a1 1 0 0 1 3 3l-9.013 9.014a2 2 0 0 1-.853.505l-2.873.84a.5.5 0 0 1-.62-.62l.84-2.873a2 2 0 0 1 .506-.852z"/></svg>
<svg class="ic" style="left:777.8px;top:268.9px;width:16px;height:16px;color:#c92a2a;" viewBox="0 0 24 24" fill="none" stroke="currentColor" stroke-width="2" stroke-linecap="round" stroke-linejoin="round"><path d="M3 6h18"/><path d="M19 6v14c0 1-1 2-2 2H7c-1 0-2-1-2-2V6"/><path d="M8 6V4c0-1 1-2 2-2h4c1 0 2 1 2 2v2"/><line x1="10" x2="10" y1="11" y2="17"/><line x1="14" x2="14" y1="11" y2="17"/></svg>
<div class="box" style="left:0;top:309px;width:1276px;height:1px;background:#e5e7eb"></div>
<div class="t" style="left:17px;top:331.0px;font-size:14px;line-height:20px;color:#2a2a2e;font-weight:normal;letter-spacing:0.15px">Digital Art</div>
<svg class="ic" style="left:741.7px;top:333.5px;width:16px;height:16px;color:#3a6fd8;" viewBox="0 0 24 24" fill="none" stroke="currentColor" stroke-width="2.2" stroke-linecap="round" stroke-linejoin="round"><path d="M12 3H5a2 2 0 0 0-2 2v14a2 2 0 0 0 2 2h14a2 2 0 0 0 2-2v-7"/><path d="M18.375 2.625a1 1 0 0 1 3 3l-9.013 9.014a2 2 0 0 1-.853.505l-2.873.84a.5.5 0 0 1-.62-.62l.84-2.873a2 2 0 0 1 .506-.852z"/></svg>
<svg class="ic" style="left:777.8px;top:333.9px;width:16px;height:16px;color:#c92a2a;" viewBox="0 0 24 24" fill="none" stroke="currentColor" stroke-width="2" stroke-linecap="round" stroke-linejoin="round"><path d="M3 6h18"/><path d="M19 6v14c0 1-1 2-2 2H7c-1 0-2-1-2-2V6"/><path d="M8 6V4c0-1 1-2 2-2h4c1 0 2 1 2 2v2"/><line x1="10" x2="10" y1="11" y2="17"/><line x1="14" x2="14" y1="11" y2="17"/></svg>
<div class="box" style="left:0;top:374px;width:1276px;height:1px;background:#e5e7eb"></div>
<div class="t" style="left:17px;top:396.0px;font-size:14px;line-height:20px;color:#2a2a2e;font-weight:normal;letter-spacing:0.15px">Sculpture</div>
<svg class="ic" style="left:741.7px;top:398.5px;width:16px;height:16px;color:#3a6fd8;" viewBox="0 0 24 24" fill="none" stroke="currentColor" stroke-width="2.2" stroke-linecap="round" stroke-linejoin="round"><path d="M12 3H5a2 2 0 0 0-2 2v14a2 2 0 0 0 2 2h14a2 2 0 0 0 2-2v-7"/><path d="M18.375 2.625a1 1 0 0 1 3 3l-9.013 9.014a2 2 0 0 1-.853.505l-2.873.84a.5.5 0 0 1-.62-.62l.84-2.873a2 2 0 0 1 .506-.852z"/></svg>
<svg class="ic" style="left:777.8px;top:398.9px;width:16px;height:16px;color:#c92a2a;" viewBox="0 0 24 24" fill="none" stroke="currentColor" stroke-width="2" stroke-linecap="round" stroke-linejoin="round"><path d="M3 6h18"/><path d="M19 6v14c0 1-1 2-2 2H7c-1 0-2-1-2-2V6"/><path d="M8 6V4c0-1 1-2 2-2h4c1 0 2 1 2 2v2"/><line x1="10" x2="10" y1="11" y2="17"/><line x1="14" x2="14" y1="11" y2="17"/></svg>
<div class="box" style="left:0;top:439px;width:1276px;height:1px;background:#e5e7eb"></div>
<div class="t" style="left:17px;top:461.0px;font-size:14px;line-height:20px;color:#2a2a2e;font-weight:normal;letter-spacing:0.15px">Watercolor</div>
<svg class="ic" style="left:741.7px;top:463.5px;width:16px;height:16px;color:#3a6fd8;" viewBox="0 0 24 24" fill="none" stroke="currentColor" stroke-width="2.2" stroke-linecap="round" stroke-linejoin="round"><path d="M12 3H5a2 2 0 0 0-2 2v14a2 2 0 0 0 2 2h14a2 2 0 0 0 2-2v-7"/><path d="M18.375 2.625a1 1 0 0 1 3 3l-9.013 9.014a2 2 0 0 1-.853.505l-2.873.84a.5.5 0 0 1-.62-.62l.84-2.873a2 2 0 0 1 .506-.852z"/></svg>
<svg class="ic" style="left:777.8px;top:463.9px;width:16px;height:16px;color:#c92a2a;" viewBox="0 0 24 24" fill="none" stroke="currentColor" stroke-width="2" stroke-linecap="round" stroke-linejoin="round"><path d="M3 6h18"/><path d="M19 6v14c0 1-1 2-2 2H7c-1 0-2-1-2-2V6"/><path d="M8 6V4c0-1 1-2 2-2h4c1 0 2 1 2 2v2"/><line x1="10" x2="10" y1="11" y2="17"/><line x1="14" x2="14" y1="11" y2="17"/></svg>
<div class="box" style="left:0;top:504px;width:1276px;height:1px;background:#e5e7eb"></div>
<div class="t" style="left:17px;top:526.0px;font-size:14px;line-height:20px;color:#2a2a2e;font-weight:normal;letter-spacing:0.15px">Photography</div>
<svg class="ic" style="left:741.7px;top:528.5px;width:16px;height:16px;color:#3a6fd8;" viewBox="0 0 24 24" fill="none" stroke="currentColor" stroke-width="2.2" stroke-linecap="round" stroke-linejoin="round"><path d="M12 3H5a2 2 0 0 0-2 2v14a2 2 0 0 0 2 2h14a2 2 0 0 0 2-2v-7"/><path d="M18.375 2.625a1 1 0 0 1 3 3l-9.013 9.014a2 2 0 0 1-.853.505l-2.873.84a.5.5 0 0 1-.62-.62l.84-2.873a2 2 0 0 1 .506-.852z"/></svg>
<svg class="ic" style="left:777.8px;top:528.9px;width:16px;height:16px;color:#c92a2a;" viewBox="0 0 24 24" fill="none" stroke="currentColor" stroke-width="2" stroke-linecap="round" stroke-linejoin="round"><path d="M3 6h18"/><path d="M19 6v14c0 1-1 2-2 2H7c-1 0-2-1-2-2V6"/><path d="M8 6V4c0-1 1-2 2-2h4c1 0 2 1 2 2v2"/><line x1="10" x2="10" y1="11" y2="17"/><line x1="14" x2="14" y1="11" y2="17"/></svg>
<div class="box" style="left:0;top:569px;width:1276px;height:1px;background:#e5e7eb"></div>
<div class="t" style="left:17px;top:591.0px;font-size:14px;line-height:20px;color:#2a2a2e;font-weight:normal;letter-spacing:0.15px">Acrylic Painting</div>
<svg class="ic" style="left:741.7px;top:593.5px;width:16px;height:16px;color:#3a6fd8;" viewBox="0 0 24 24" fill="none" stroke="currentColor" stroke-width="2.2" stroke-linecap="round" stroke-linejoin="round"><path d="M12 3H5a2 2 0 0 0-2 2v14a2 2 0 0 0 2 2h14a2 2 0 0 0 2-2v-7"/><path d="M18.375 2.625a1 1 0 0 1 3 3l-9.013 9.014a2 2 0 0 1-.853.505l-2.873.84a.5.5 0 0 1-.62-.62l.84-2.873a2 2 0 0 1 .506-.852z"/></svg>
<svg class="ic" style="left:777.8px;top:593.9px;width:16px;height:16px;color:#c92a2a;" viewBox="0 0 24 24" fill="none" stroke="currentColor" stroke-width="2" stroke-linecap="round" stroke-linejoin="round"><path d="M3 6h18"/><path d="M19 6v14c0 1-1 2-2 2H7c-1 0-2-1-2-2V6"/><path d="M8 6V4c0-1 1-2 2-2h4c1 0 2 1 2 2v2"/><line x1="10" x2="10" y1="11" y2="17"/><line x1="14" x2="14" y1="11" y2="17"/></svg>
<div class="box" style="left:0;top:634px;width:1276px;height:1px;background:#e5e7eb"></div>
</div>
<div class="box" style="left:1861px;top:193px;width:10px;height:648px;background:#fafafa"></div>
<div class="box" style="left:1863px;top:205px;width:6px;height:578px;background:#cdcdd0;border-radius:3px"></div>
<div class="box" style="left:1863px;top:196px;width:0;height:0;border-left:3px solid transparent;border-right:3px solid transparent;border-bottom:4px solid #bdbdbd"></div>
<div class="box" style="left:1863px;top:834px;width:0;height:0;border-left:3px solid transparent;border-right:3px solid transparent;border-top:4px solid #bdbdbd"></div>
</body></html>
